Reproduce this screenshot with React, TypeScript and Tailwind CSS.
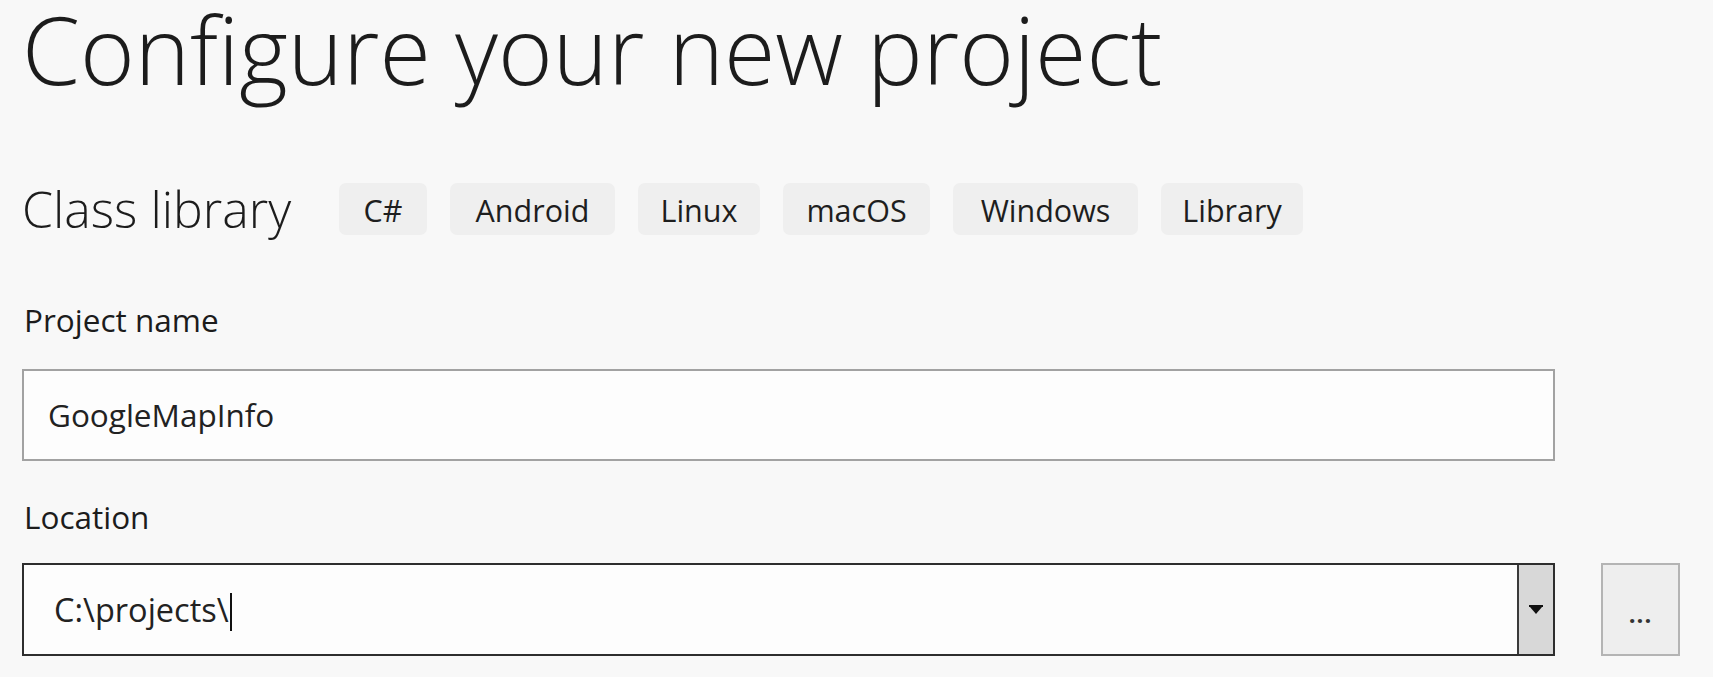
import React from "react";

const chips = [
  { label: "C#", w: "w-[88px]" },
  { label: "Android", w: "w-[165px]" },
  { label: "Linux", w: "w-[122px]" },
  { label: "macOS", w: "w-[147px]" },
  { label: "Windows", w: "w-[185px]" },
  { label: "Library", w: "w-[142px]" },
];

export default function App() {
  return (
    <div
      className="w-[1713px] h-[677px] overflow-hidden bg-[#f8f8f8] text-[#1c1c1c] pl-[22px]"
      style={{ fontFamily: '"Open Sans", "Noto Sans", sans-serif' }}
    >
      <h1 className="text-[93.5px] leading-[98px] font-light">
        Configure your new project
      </h1>

      <div className="mt-[85px] flex items-start">
        <div className="w-[317px] h-[52px] text-[50px] leading-[52px] font-light whitespace-nowrap">
          Class library
        </div>
        <div className="flex gap-[23px]">
          {chips.map((c) => (
            <div
              key={c.label}
              className={`${c.w} h-[52px] pt-[1px] rounded-[7px] bg-[#efefef] flex items-center justify-center text-[30.5px] leading-[36px] font-medium text-[#1e1e1e]`}
            >
              {c.label}
            </div>
          ))}
        </div>
      </div>

      <div className="mt-[67px] text-[31.5px] leading-[36px] pl-[2px]">Project name</div>
      <div className="mt-[31px] w-[1533px] h-[92px] border-2 border-[#a2a2a2] bg-[#fdfdfd] flex items-center pl-[24px] text-[31.5px] leading-[36px] text-[#222]">
        GoogleMapInfo
      </div>

      <div className="mt-[38px] text-[31.5px] leading-[36px] pl-[2px]">Location</div>
      <div className="mt-[28px] flex items-start">
        <div className="w-[1533px] h-[93px] border-2 border-[#2e2e2e] bg-[#fdfdfd] flex">
          <div className="flex-1 flex items-center pl-[30px] text-[32.5px] leading-[38px] text-[#222]">
            <span>C:\projects\</span>
            <span className="ml-[1px] w-[2px] h-[38px] bg-[#111] translate-y-[2px]" />
          </div>
          <div className="w-[36px] h-full border-l-2 border-[#3a3a3a] bg-[#d8d8d8] flex items-center justify-center">
            <svg width="14" height="10" viewBox="0 0 14 10">
              <rect x="0" y="0" width="14" height="2" fill="#111" />
              <path d="M1 2 L13 2 L7 9 Z" fill="#111" />
            </svg>
          </div>
        </div>
        <div className="ml-[46px] w-[79px] h-[93px] border-2 border-[#b4b4b4] bg-[#eeeeee] flex items-center justify-center pt-[8px]">
          <span className="text-[24px] leading-none font-bold tracking-[1px] text-[#333]">...</span>
        </div>
      </div>
    </div>
  );
}
